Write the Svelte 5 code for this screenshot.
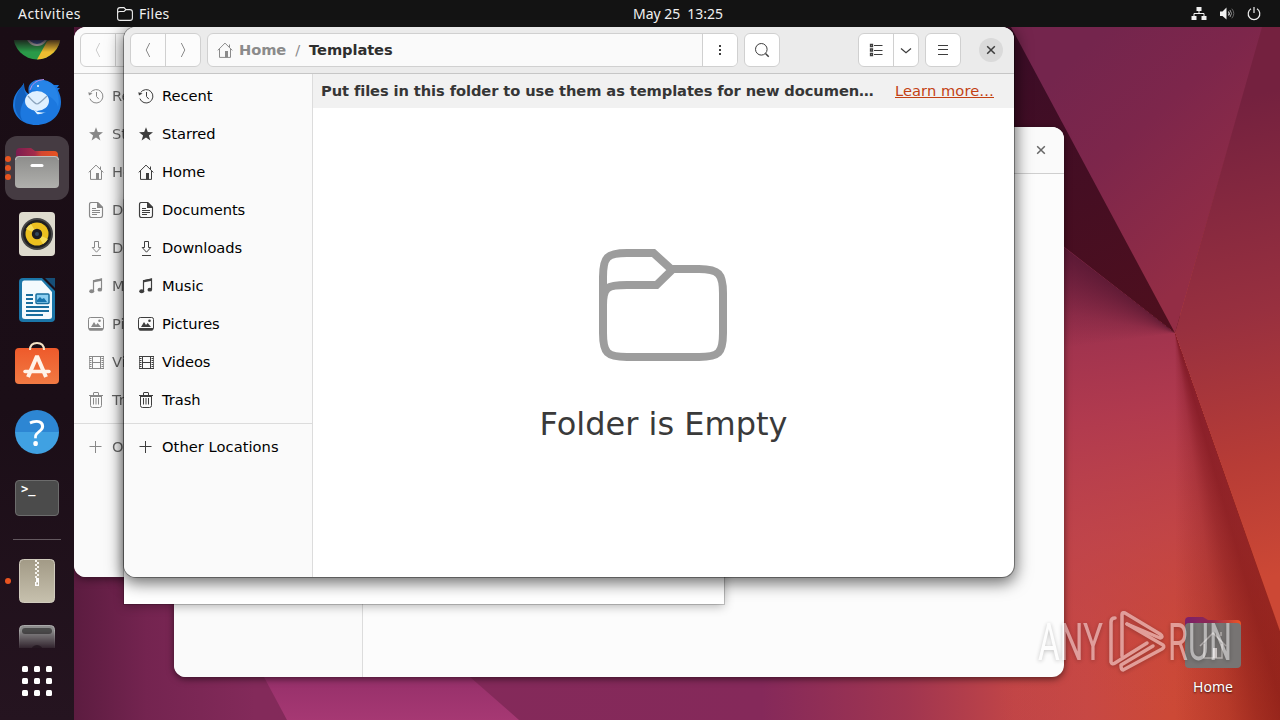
<script>
  const places = [
    ['recent', 'Recent'], ['star', 'Starred'], ['home', 'Home'], ['doc', 'Documents'],
    ['down', 'Downloads'], ['music', 'Music'], ['pic', 'Pictures'], ['video', 'Videos'], ['trash', 'Trash']
  ];
  const dots = [0, 1, 2];
</script>

{#snippet icon(name)}
  <svg class="ic" viewBox="0 0 16 16" width="16" height="16" fill="none" stroke="currentColor" stroke-width="1">
    {#if name === 'recent'}
      <path d="M2.600 4.600A6.700 6.700 0 1 1 1.900 10.600M8.500 4v4.500l2.300 2.600" /><path d="M.3 4.200l4.200 1.400L1 7.600z" fill="currentColor" stroke="none" />
    {:else if name === 'star'}
      <path d="M8 1.200l1.800 4.900 5.200.1-4.100 3.200 1.500 5L8 11.500l-4.400 2.900 1.500-5L1 6.200l5.200-.1z" fill="currentColor" stroke="none" />
    {:else if name === 'home'}
      <path d="M.7 8.400L8 1.100l7.300 7.300M2.500 7v8.400h11V7M12.500 5.200V2.500" /><path d="M8 9h3v6.500H8z" fill="currentColor" stroke="none" />
    {:else if name === 'doc'}
      <path d="M3.500.5h6l5 5v8q0 2-2 2h-9q-2 0-2-2v-11q0-2 2-2zM4 6.500h4M4 8.500h8M4 10.500h8M4 12.500h5" stroke-width="1.150" /><path d="M9 .5h1.500l4 4V6H9z" fill="currentColor" stroke="none" />
    {:else if name === 'down'}
      <path d="M6.500 1.500h4v6h2.300L8.500 12.200 4.200 7.500h2.300zM4 15.500h9" />
    {:else if name === 'music'}
      <path d="M5.500 13V2.700L13.500 1v10.500" stroke-width="1.200" /><path d="M5 2.300L14 .5v2.200L5 4.500z" fill="currentColor" stroke="none" /><ellipse cx="3.700" cy="13.300" rx="2.500" ry="2" fill="currentColor" stroke="none" /><ellipse cx="11.800" cy="11.700" rx="2.300" ry="1.900" fill="currentColor" stroke="none" />
    {:else if name === 'pic'}
      <rect x=".5" y="1.500" width="15" height="12.500" rx="1.800" /><path d="M1 12h14v1.500q0 1-1 1H2q-1 0-1-1zM3 11l3-5 2 3 1.700-2L13 11z" fill="currentColor" stroke="none" /><circle cx="11.500" cy="4.800" r="1.300" fill="currentColor" stroke="none" />
    {:else if name === 'video'}
      <path d="M4.500 2v12.500M12.500 2v12.500M1 2.500h15M4.500 8.500h8M1 14.500h15" /><path d="M2.500 2v13M14.500 2v13" stroke-width="2" stroke-dasharray="1 1" /><path d="M1.500 2v13M15.500 2v13" opacity=".7" />
    {:else if name === 'trash'}
      <path d="M1 3.500h14M5.500 3V1q0-.5.500-.5h4q.5 0 .5.500v2M2.500 4v9.500q0 2 2 2h7q2 0 2-2V4M5.500 6v6.500M8 6v6.500M10.500 6v6.500" /><path d="M2 3h12v2H2z" fill="currentColor" stroke="none" />
    {:else if name === 'plus'}
      <path d="M7.500 2v12M1.500 7.500h12" />
    {:else if name === 'left'}
      <path d="M9.700 1L6.200 8l3.500 7" />
    {:else if name === 'right'}
      <path d="M6.300 1l3.500 7-3.500 7" />
    {:else if name === 'dots'}
      <path d="M7 3h2v2H7zM7 7h2v2H7zM7 11h2v2H7z" fill="currentColor" stroke="none" />
    {:else if name === 'search'}
      <circle cx="7.300" cy="7.300" r="5.800" /><path d="M11.500 11.500l3.200 3.200" stroke-width="1.500" />
    {:else if name === 'list'}
      <path d="M6 3.500h8.500M6 8.500h8.500M6 12.500h8.500" /><path d="M2.500 2.500h2v2h-2zM2.500 7h2v2h-2zM2.500 11.500h2v2h-2z" stroke-width="1.300" />
    {:else if name === 'chev'}
      <path d="M3 6.500l5 4.300 5-4.300" stroke-width="1.200" />
    {:else if name === 'menu'}
      <path d="M3 3.500h10M3 7.500h10M3 12.500h10" />
    {:else if name === 'close'}
      <path d="M4.200 4.200l7.600 7.600M11.800 4.200l-7.600 7.600" stroke-width="1.500" />
    {/if}
  </svg>
{/snippet}

{#snippet sidebar()}
  <nav class="side">
    {#each places as [i, label]}
      <div class="place">{@render icon(i)}<span>{label}</span></div>
    {/each}
    <div class="rule"></div>
    <div class="place">{@render icon('plus')}<span class="wide">Other Locations</span></div>
  </nav>
{/snippet}

{#snippet navs()}
  <div class="group nav"><span>{@render icon('left')}</span><span>{@render icon('right')}</span></div>
{/snippet}

<main class="screen">
  <svg class="wall" viewBox="0 0 1280 720" width="1280" height="720">
    <defs>
      <linearGradient id="base" gradientUnits="userSpaceOnUse" x1="74" y1="0" x2="1280" y2="0">
        <stop offset="0" stop-color="#5c1c40" /><stop offset=".06" stop-color="#742450" /><stop offset=".15" stop-color="#832a5a" />
        <stop offset=".57" stop-color="#85295a" /><stop offset=".69" stop-color="#a03550" /><stop offset=".78" stop-color="#c14547" />
        <stop offset=".84" stop-color="#c74844" /><stop offset=".91" stop-color="#cc4936" /><stop offset="1" stop-color="#c9452c" />
      </linearGradient>
      <linearGradient id="fall" gradientUnits="userSpaceOnUse" x1="1080" y1="250" x2="1140" y2="720">
        <stop offset="0" stop-color="#8d2b4e" /><stop offset=".35" stop-color="#af394f" stop-opacity=".95" /><stop offset=".62" stop-color="#bd434c" stop-opacity=".7" /><stop offset="1" stop-color="#c94840" stop-opacity="0" />
      </linearGradient>
      <linearGradient id="top" gradientUnits="userSpaceOnUse" x1="1060" y1="70" x2="1220" y2="250">
        <stop offset="0" stop-color="#74254d" /><stop offset=".4" stop-color="#7d264b" /><stop offset="1" stop-color="#932d45" />
      </linearGradient>
      <linearGradient id="right" gradientUnits="userSpaceOnUse" x1="1190" y1="110" x2="1300" y2="570">
        <stop offset="0" stop-color="#74213f" /><stop offset=".45" stop-color="#98303f" /><stop offset=".75" stop-color="#b73c36" /><stop offset="1" stop-color="#cc4835" />
      </linearGradient>
      <linearGradient id="dark" gradientUnits="userSpaceOnUse" x1="1020" y1="60" x2="1150" y2="330">
        <stop offset="0" stop-color="#3d0d27" /><stop offset="1" stop-color="#4e0f1e" />
      </linearGradient>
      <linearGradient id="violet" x2="0" y2="1"><stop stop-color="#96306a" /><stop offset="1" stop-color="#a63873" /></linearGradient>
    </defs>
    <path d="M0 0h1280v720H0z" fill="url(#base)" />
    <path d="M1000 190l175 143 105 300v87H1000z" fill="url(#fall)" />
    <path d="M264 677l23 43h232l-49-43z" fill="url(#violet)" />
    <path d="M1000 27v170l175 136 6-14L1060 27z" fill="url(#dark)" />
    <path d="M1011 27h252l-88 306z" fill="url(#top)" />
    <path d="M1262 27h18v604l-105-298z" fill="url(#right)" />
  </svg>
  <div class="shade"></div>

  <section class="win back">
    <header class="bar"><i class="grow"></i><span class="x">{@render icon('close')}</span></header>
    <div class="body"><div class="side"></div></div>
  </section>
  <section class="win mid">
    <header class="bar">{@render navs()}</header>
    <div class="body">{@render sidebar()}</div>
  </section>
  <section class="popup"></section>

  <section class="win front">
    <header class="bar">
      {@render navs()}
      <div class="group path">
        <div class="crumbs">{@render icon('home')}<b class="h">Home</b><em>/</em><b>Templates</b></div>
        <span>{@render icon('dots')}</span>
      </div>
      <div class="group"><span>{@render icon('search')}</span></div>
      <i class="grow"></i>
      <div class="group"><span>{@render icon('list')}</span><span class="slim">{@render icon('chev')}</span></div>
      <div class="group"><span>{@render icon('menu')}</span></div>
      <span class="x round">{@render icon('close')}</span>
    </header>
    <div class="body">
      {@render sidebar()}
      <div class="content">
        <div class="info"><b>Put files in this folder to use them as templates for new documen…</b><u>Learn more…</u></div>
        <div class="empty">
          <svg width="128" height="112" viewBox="0 0 128 112" fill="none" stroke="#9d9d9d" stroke-width="8">
            <path d="M4 28C4 8 8 4 28 4H54.500L72 20H100C120 20 124 25 124 44V84C124 104 120 108 100 108H28C8 108 4 104 4 84zM4 56C4 38 8 36 28 36H57.500L74 20" />
          </svg>
          <h1>Folder is Empty</h1>
        </div>
      </div>
    </div>
  </section>

  <div class="desk">
    <svg width="56" height="52" viewBox="0 0 56 52">
      <defs><linearGradient id="tab"><stop stop-color="#7b206b" /><stop offset=".45" stop-color="#8f2853" /><stop offset="1" stop-color="#ee5425" /></linearGradient></defs>
      <path d="M0 5q0-4 4-4h14l5 3h29q4 0 4 4v20H0z" fill="url(#tab)" />
      <rect y="7" width="56" height="45" rx="4" fill="#777473" />
      <path d="M15 30l13-13 13 13M19 28v14h18V28M36 20v-4" fill="none" stroke="#b6b1b0" stroke-width="1.500" /><path d="M28 32h4v10h-4z" fill="#d5cfce" />
    </svg>
    <span>Home</span>
  </div>

  <svg class="mark" width="206" height="70" viewBox="0 0 206 70" fill="#fff">
    <text x="2" y="49" font-size="52" textLength="65" lengthAdjust="spacingAndGlyphs">ANY</text>
    <text x="132" y="49" font-size="52" textLength="64" lengthAdjust="spacingAndGlyphs">RUN</text>
    <g fill="none" stroke="#fff" stroke-width="3.500" stroke-linejoin="round" stroke-linecap="round">
      <path d="M86 45V3.500Q86 1 89 2L124 23Q128 26 124 27L91 13" />
      <path d="M79 7Q75 7 75 11V51Q76 54 79 52L111 32" />
      <path d="M91 13L127 34Q129 36 126 38L87 59Q85 59 85 54L117 35" />
    </g>
  </svg>

  <aside class="dock">
    <div class="apps">
      <div class="app"><svg width="48" height="48" viewBox="0 0 48 48"><circle cx="24" cy="24" r="23.500" fill="#2a9a48" /><path d="M24 47.500l10-18 10-5V24h3.500A23.500 23.500 0 0 1 24 47.500z" fill="#edbd30" /><circle cx="24" cy="23" r="11" fill="#ddd" /><circle cx="24" cy="23" r="9" fill="#3563b0" /></svg></div>
      <div class="app"><svg width="48" height="48" viewBox="0 0 48 48">
        <path d="M11 5C9 10 0 14 0 27c0 11 10 20 23 20 14 0 25-9 25-23 0-6-2-9-3-12l2-2h-3l2-3h-5C35 1 24-1 18 5c-3 3-3 7-2 11-4-2-5-6-5-11z" fill="#1c78df" />
        <path d="M11 5C9 10 2 14 2 27c0 7 4 13 8 16C4 35 10 23 14 18c-3-4-3-8-3-13z" fill="#1260bd" />
        <path d="M17 11c4-10 16-10 22-5 6 5 8 15 6 23-2-9-12-14-28-18z" fill="#2684e8" />
        <path d="M17 12q3-10 14-10.500" fill="none" stroke="#b98fe8" stroke-width="1" />
        <ellipse cx="24" cy="23" rx="12" ry="10" fill="#dff0ff" /><path d="M15 18q7 8 9 8t10-8" fill="none" stroke="#8ba4bd" stroke-width="1.200" /><path d="M20 31q6 5 13 3-7 3-9 2z" fill="#e4f4ff" /><circle cx="25" cy="8" r="1" fill="#fff" />
      </svg></div>
      <div class="app on">
        {#each dots as _}<i></i>{/each}
        <svg width="44" height="40" viewBox="0 0 44 40"><defs><linearGradient id="t2"><stop stop-color="#7b1c50" /><stop offset=".45" stop-color="#a52c4a" /><stop offset=".6" stop-color="#d44730" /><stop offset="1" stop-color="#e95420" /></linearGradient><linearGradient id="g2" x2="0" y2="1"><stop stop-color="#8d8d8b" /><stop offset="1" stop-color="#b0b0ad" /></linearGradient></defs>
          <path d="M1 4q0-4 4-4h11l4 3h19q4 0 4 4v12H1z" fill="url(#t2)" /><rect y="8" width="44" height="32" rx="4" fill="url(#g2)" /><path d="M.5 12q0-3.500 3.500-3.500h36q3.500 0 3.500 3.500" fill="none" stroke="#c1c1bf" /><path d="M17 17.500h10" stroke="#fff" stroke-width="3" stroke-linecap="round" /></svg>
      </div>
      <div class="app"><svg width="36" height="44" viewBox="0 0 36 44"><rect width="36" height="44" rx="4" fill="#dedbce" /><circle cx="18" cy="22" r="16" fill="#454545" /><circle cx="18" cy="22" r="14" fill="#202020" /><circle cx="18" cy="22" r="11.500" fill="#ecc01f" /><path d="M18 22L7 17a11.500 11.500 0 0 1 5-5zM18 22l11 5a11.500 11.500 0 0 1-5 5z" fill="#f6dc58" /><circle cx="18" cy="22" r="5.200" fill="#1c1d22" /><circle cx="18" cy="22" r="2" fill="#33495c" /></svg></div>
      <div class="app"><svg width="36" height="44" viewBox="0 0 36 44"><path d="M4 0h19l13 13v27q0 4-4 4H4q-4 0-4-4V4q0-4 4-4z" fill="#1b76a8" /><path d="M5 2.500h17.500L33 14v24.500q0 2.500-3 2.500H6q-3 0-3-2.500V5q0-2.500 2-2.500z" fill="#f3fafd" /><path d="M26 0h10v10z" fill="#164f78" /><g stroke="#176d9d" stroke-width="2"><path d="M7 17h7M7 21h7M7 25h7M7 29h23M7 33h23M7 37h17" /></g><rect x="17" y="16" width="13" height="9.500" rx="1" fill="#8dd0f2" stroke="#176d9d" stroke-width="1.500" /><path d="M18 24v-2l3-3 2 2 2-1 3 4z" fill="#1674ad" /></svg></div>
      <div class="app"><svg width="44" height="48" viewBox="0 0 44 48"><defs><linearGradient id="o" x2="0" y2="1"><stop stop-color="#ee5a2b" /><stop offset="1" stop-color="#f17a43" /></linearGradient></defs><rect y="6" width="44" height="36" rx="4" fill="url(#o)" /><path d="M15 8q0-7 7-7t7 7" fill="none" stroke="#f5e4c6" stroke-width="2" /><path d="M13 35L22 14l9 21" fill="none" stroke="#fff3e9" stroke-width="4" stroke-linejoin="bevel" /><path d="M10 29.500h24" stroke="#fff3e9" stroke-width="3.500" stroke-linecap="round" /></svg></div>
      <div class="app"><div class="help">?</div></div>
      <div class="app"><div class="term">&gt;_</div></div>
      <div class="split"></div>
      <div class="app run"><svg width="36" height="44" viewBox="0 0 36 44"><defs><linearGradient id="z" x2="0" y2="1"><stop stop-color="#a29a86" /><stop offset="1" stop-color="#c7c1ae" /></linearGradient></defs><rect x=".5" y=".5" width="35" height="43" rx="4" fill="url(#z)" stroke="#d0cbbd" /><path d="M17 1v18" stroke="#f5f3ed" stroke-width="2" stroke-dasharray="2 2" /><path d="M19 3v16" stroke="#f5f3ed" stroke-width="2" stroke-dasharray="2 2" /><path d="M17 19h3v8h-4v-4h1z" fill="#fff" /><path d="M17.500 23.500H19v2h-1.500z" fill="#aaa491" /></svg></div>
      <div class="app"><svg width="36" height="44" viewBox="0 0 36 44"><rect x=".5" y=".5" width="35" height="43" rx="4" fill="#8c8c8c" stroke="#aaa" /><rect x="3" y="3" width="30" height="6" rx="3" fill="#4b4b4b" /><circle cx="18" cy="26" r="6" fill="#333" /></svg></div>
    </div>
    <div class="grid">{#each Array(9) as _}<i></i>{/each}</div>
  </aside>

  <div class="panel">
    <span class="act">Activities</span>
    <svg width="16" height="14" viewBox="0 0 16 14" fill="none" stroke="#eee" stroke-width="1.100"><path d="M.6 3Q.6.6 3 .6h4l2 2h4q2.400 0 2.400 2.400v6q0 2.400-2.400 2.400H3Q.6 13.400.6 11zM.6 6Q.6 4.500 3 4.500h4l2-1.900" /></svg>
    <span class="files">Files</span>
    <span class="clock">May 25&nbsp; 13:25</span>
    <div class="tray">
      <svg width="16" height="14" viewBox="0 0 16 14" fill="#f0f0f0"><path d="M5.500 0h5v4h-5zM.5 9h5v4h-5zM10.500 9h5v4h-5z" /><path d="M8 4v3M3 9.500V6.500h10v3" fill="none" stroke="#f0f0f0" /></svg>
      <svg width="16" height="14" viewBox="0 0 16 14" fill="#f0f0f0"><path d="M1 4.500h2.500L7.500.500v12l-4-3.500H1z" /><path d="M9.500 4.500q1.500 2 0 4" stroke="#ddd" fill="none" stroke-width="1.200" /><path d="M11 3q3 3.500 0 7" stroke="#999" fill="none" /><path d="M12.800 1.700q4 4.800 0 9.600" stroke="#666" fill="none" /></svg>
      <svg width="14" height="14" viewBox="0 0 14 14" fill="none" stroke="#f0f0f0" stroke-width="1.200"><path d="M4 1.800a5.800 5.800 0 1 0 6 0M7 0v6" /></svg>
    </div>
  </div>
</main>

<style>
  :global(body) { margin: 0; overflow: hidden; }
  .screen { position: relative; width: 1280px; height: 720px; overflow: hidden; font: 14.670px "DejaVu Sans", sans-serif; color: #000; }
  .wall { position: absolute; inset: 0; display: block; }
  .shade { position: absolute; inset: 0; background: conic-gradient(from 0deg at 1175px 333px, transparent 160.500deg, rgba(105, 8, 12, .52) 160.700deg, rgba(105, 8, 12, .54) 164deg, rgba(105, 8, 12, .4) 168deg, rgba(105, 8, 12, .2) 172deg, transparent 180deg, transparent 262deg, rgba(45, 8, 30, .15) 280deg, rgba(45, 8, 30, .5) 307.500deg, transparent 307.900deg); }
  .win { position: absolute; display: flex; flex-direction: column; width: 890px; height: 550px; border-radius: 12px; overflow: hidden; background: #fff; }
  .back { left: 174px; top: 127px; background: #fcfcfc; box-shadow: 0 2px 7px rgba(0, 0, 0, .55); }
  .mid { left: 74px; top: 27px; width: 600px; box-shadow: 0 2px 8px rgba(0, 0, 0, .5); }
  .front { left: 124px; top: 27px; box-shadow: 0 0 0 1px rgba(0, 0, 0, .34), 0 4px 16px 2px rgba(0, 0, 0, .58); }
  .popup { position: absolute; left: 124px; top: 200px; width: 600px; height: 404px; background: #fff; box-shadow: 0 0 0 1px rgba(0, 0, 0, .18), 0 2px 10px rgba(0, 0, 0, .3); }
  .bar { box-sizing: border-box; height: 47px; flex: none; display: flex; align-items: center; gap: 6px; padding: 0 6px; background: #fafafa; border-bottom: 1px solid #cfcfcf; color: #3d3d3d; }
  .front .bar { background: #ebebeb; border-color: #c6c6c6; }
  .grow { flex: 1; }
  .ic { display: block; flex: none; }
  .group { box-sizing: border-box; height: 34px; display: flex; border: 1px solid #d0d0d0; border-radius: 6px; background: #fff; }
  .group > span { width: 34px; display: flex; align-items: center; justify-content: center; }
  .group > span + span, .crumbs + span { border-left: 1px solid #d0d0d0; }
  .group > .slim { width: 24px; }
  .nav { color: #8a8a8a; background: #fcfcfc; }
  .mid .nav { color: #ccc; }
  .path { width: 531px; background: #fafafa; }
  .path > span { background: #fff; border-radius: 0 5px 5px 0; }
  .crumbs { flex: 1; display: flex; align-items: center; padding-left: 9px; color: #8b8b8b; }
  .crumbs b, .crumbs em { padding-bottom: 2px; }
  .crumbs b { font-size: 14.670px; letter-spacing: -.1px; color: #2f2f2f; }
  .crumbs .h { color: #8b8b8b; margin-left: 6px; }
  .crumbs em { font-style: normal; margin: 0 9px; }
  .x { width: 24px; height: 24px; display: flex; align-items: center; justify-content: center; margin: 0 5px; }
  .back .x { color: #666; }
  .round { background: #dadada; border-radius: 50%; margin: 0 5px 0 12px; }
  .body { flex: 1; display: flex; min-height: 0; }
  .side { box-sizing: border-box; width: 189px; flex: none; background: #fafafa; border-right: 1px solid #dcdcdc; padding-top: 3px; }
  .place { height: 38px; display: flex; align-items: center; gap: 8px; padding-left: 14px; white-space: nowrap; }
  .place span { padding-bottom: 2px; letter-spacing: -.04px; }
  .place .wide { letter-spacing: .05px; }
  .place :global(svg) { color: #3d3d3d; }
  .mid .place { opacity: .6; }
  .rule { height: 1px; background: #dcdcdc; margin: 4px 0; }
  .content { flex: 1; display: flex; flex-direction: column; min-width: 0; }
  .info { height: 34px; box-sizing: border-box; background: #f1f1f1; display: flex; align-items: center; justify-content: space-between; padding: 0 20px 2px 8px; white-space: nowrap; color: #363636; }
  .info b { letter-spacing: -.09px; }
  .info u { color: #c34113; letter-spacing: .07px; }
  .empty { flex: 1; display: flex; flex-direction: column; align-items: center; padding-top: 141px; }
  .empty svg { margin-right: 1px; }
  h1 { font-weight: 400; font-size: 32px; line-height: 38px; margin: 44px 0 0; color: #3a3a3a; }
  .desk { position: absolute; left: 1185px; top: 616px; width: 56px; display: flex; flex-direction: column; align-items: center; gap: 9px; color: #fff; font: 14px/20px "Noto Sans", sans-serif; text-shadow: 0 1px 2px rgba(0, 0, 0, .7); }
  .mark { position: absolute; left: 1036px; top: 611px; opacity: .47; font-family: Roboto, sans-serif; font-weight: 400; filter: drop-shadow(0 1px 2px rgba(0, 0, 0, .5)); }
  .dock { position: absolute; left: 0; top: 27px; width: 74px; height: 693px; box-sizing: border-box; padding-top: 13px; background: linear-gradient(#1a0d15, #1b0e17 55%, #251420); display: flex; flex-direction: column; align-items: center; }
  .apps { height: 608px; width: 74px; overflow: hidden; flex: none; -webkit-mask: linear-gradient(rgba(0, 0, 0, .2), #000 12px, #000 590px, rgba(0, 0, 0, .15)); mask: linear-gradient(rgba(0, 0, 0, .2), #000 12px, #000 590px, rgba(0, 0, 0, .15)); }
  .app { width: 64px; height: 64px; margin: 0 5px 2px; display: flex; align-items: center; justify-content: center; position: relative; }
  .app:first-child { margin-top: -36px; }
  .on { background: #453b42; border-radius: 12px; }
  .on i, .run::before { content: ""; position: absolute; left: 0; top: 29px; width: 6px; height: 6px; border-radius: 50%; background: #e95420; }
  .on i:nth-child(1) { top: 20px; }
  .on i:nth-child(3) { top: 38px; }
  .help { width: 44px; height: 44px; border-radius: 50%; background: linear-gradient(#2d86d3 50%, #40a1e2 50%); color: #fff; font: 37px/44px "Noto Sans", sans-serif; text-align: center; }
  .term { box-sizing: border-box; width: 44px; height: 36px; border: 1px solid #6c6c6c; border-radius: 4px; background: #4b4b4b; color: #fff; font: bold 12px/16px "DejaVu Sans Mono", monospace; padding-left: 5px; }
  .split { width: 48px; height: 1px; margin: 9px 13px; background: #63585f; }
  .grid { margin-top: 18px; display: grid; grid-template-columns: repeat(3, 6px); gap: 6px; }
  .grid i { width: 6px; height: 6px; border-radius: 1.500px; background: #fff; }
  .panel { position: absolute; left: 0; top: 0; width: 1280px; height: 27px; box-sizing: border-box; padding: 0 18px; background: #131313; display: flex; align-items: center; color: #f0f0f0; font: 14px/26px "Noto Sans", sans-serif; white-space: pre; }
  .act { width: 99px; letter-spacing: .46px; }
  .files { width: 494px; margin-left: 6px; letter-spacing: .3px; }
  .clock { letter-spacing: -.04px; }
  .tray { margin-left: auto; display: flex; gap: 12px; margin-right: 1px; }
</style>
